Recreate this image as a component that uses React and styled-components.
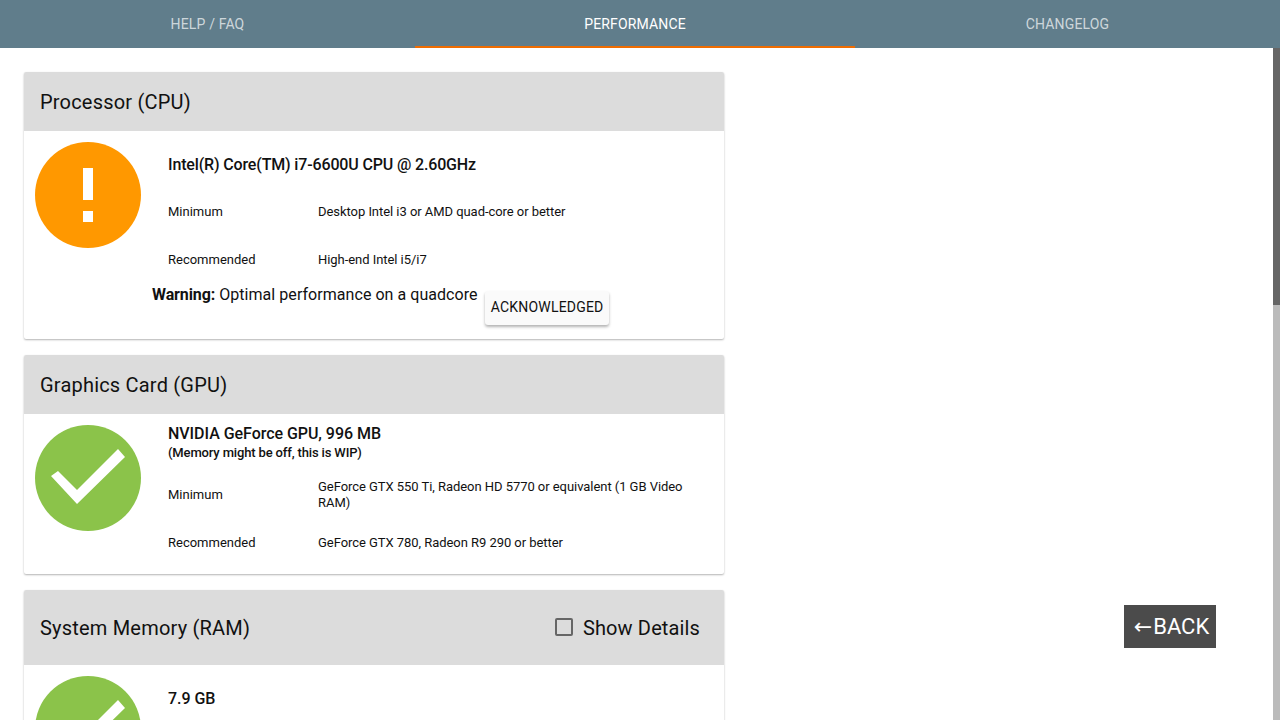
import React from 'react';
import styled, { createGlobalStyle } from 'styled-components';

const GlobalStyle = createGlobalStyle`
  html, body, #root {
    margin: 0;
    height: 100%;
  }
  body {
    overflow: hidden;
    background: #fff;
    font-family: Roboto, "Liberation Sans", sans-serif;
    color: #111;
  }
`;

const Page = styled.div`
  position: relative;
  display: flex;
  flex-direction: column;
  height: 720px;
`;

const Tabs = styled.nav`
  display: grid;
  grid-template-columns: 415px 440px 425px;
  flex: 0 0 48px;
  background: #607d8b;
`;

const Tab = styled.div`
  display: flex;
  align-items: center;
  justify-content: center;
  border-bottom: 2px solid ${(p) => (p.$active ? '#ef6c00' : 'transparent')};
  border-top: 2px solid transparent;
  color: ${(p) => (p.$active ? '#fff' : 'rgba(255, 255, 255, 0.7)')};
  font-size: 14px;
  font-weight: 400;
  letter-spacing: 0.15px;
  text-transform: uppercase;
`;

const Body = styled.div`
  display: flex;
  flex: 1;
  min-height: 0;
`;

const Content = styled.main`
  flex: 1;
  display: flex;
  flex-direction: column;
  gap: 16px;
  padding: 24px;
  overflow: hidden;
`;

const Scrollbar = styled.div`
  flex: 0 0 7px;
  display: flex;
  flex-direction: column;
  background: #bbb;
`;

const ScrollThumb = styled.div`
  height: 257px;
  background: #666;
`;

const Card = styled.section`
  flex: none;
  width: 700px;
  background: #fff;
  border-radius: 2px;
  box-shadow: 0 1px 2px rgba(0, 0, 0, 0.3);
`;

const CardHeader = styled.header`
  display: flex;
  align-items: center;
  justify-content: space-between;
  height: ${(p) => (p.$tall ? '75px' : '59px')};
  padding: 0 24px 0 16px;
  background: #dcdcdc;
  border-radius: 2px 2px 0 0;
`;

const CardTitle = styled.h2`
  margin: 0;
  font-size: 20px;
  font-weight: 400;
  letter-spacing: 0.2px;
`;

const ShowDetails = styled.label`
  display: flex;
  align-items: center;
  gap: 10px;
  font-size: 20px;
  letter-spacing: 0.13px;
`;

const CheckBox = styled.span`
  box-sizing: border-box;
  width: 18px;
  height: 18px;
  margin-bottom: 2px;
  border: 2px solid #666;
  border-radius: 2px;
`;

const CardBody = styled.div`
  display: flex;
  padding: 8px 0;
`;

const IconColumn = styled.div`
  flex: 0 0 144px;
  padding: 3px 0 0 11px;
  box-sizing: border-box;
`;

const Details = styled.div`
  flex: 1;
  display: flex;
  flex-direction: column;
  padding-right: 16px;
`;

const DeviceName = styled.div`
  display: flex;
  flex-direction: column;
  justify-content: center;
  box-sizing: border-box;
  height: 48px;
  padding-top: 2px;
  font-size: 16px;
  font-weight: 500;
  letter-spacing: ${(p) => (p.$tight ? '-0.15px' : '-0.04px')};
`;

const DeviceNote = styled.div`
  margin-bottom: 8px;
  font-size: 13px;
  line-height: 19px;
  letter-spacing: -0.15px;
`;

const Row = styled.div`
  display: flex;
  align-items: center;
  box-sizing: border-box;
  height: 48px;
  padding-top: 2px;
  font-size: 13px;
  line-height: 16px;
`;

const RowLabel = styled.div`
  flex: 0 0 150px;
`;

const RowValue = styled.div`
  flex: 1;
  letter-spacing: -0.05px;
`;

const WarningRow = styled.div`
  display: flex;
  align-items: flex-start;
  gap: 7px;
  height: 48px;
  margin-left: -16px;
  font-size: 16px;
  line-height: 24px;
  letter-spacing: 0.05px;
`;

const WarningLabel = styled.strong`
  letter-spacing: -0.1px;
`;

const Acknowledge = styled.button`
  width: 124px;
  height: 34px;
  margin-top: 8px;
  padding: 0 0 2px 1px;
  border: 0;
  border-radius: 3px;
  background: #fafafa;
  box-shadow: 0 2px 3px rgba(0, 0, 0, 0.3);
  color: #111;
  font-family: inherit;
  font-size: 14px;
  letter-spacing: 0.2px;
  text-transform: uppercase;
`;

const BackButton = styled.button`
  position: absolute;
  left: 1124px;
  top: 605px;
  display: flex;
  align-items: center;
  justify-content: center;
  width: 92px;
  height: 43px;
  padding: 0 0 0 3px;
  border: 0;
  background: #4b4b4b;
  color: #fff;
  font-family: Roboto, "DejaVu Sans", sans-serif;
  font-size: 22px;
`;

const BackArrow = styled.span`
  margin-right: 1px;
`;

const WarningIcon = () => (
  <svg width="106" height="106" viewBox="0 0 106 106">
    <circle cx="53" cy="53" r="53" fill="#ff9800" />
    <path d="M48 26h10v32H48zM48 69h10v11H48z" fill="#fff" />
  </svg>
);

const CheckIcon = () => (
  <svg width="106" height="106" viewBox="0 0 106 106">
    <circle cx="53" cy="53" r="53" fill="#8bc34a" />
    <path d="M16 51l26 28 48-47-7-8-41 41-19-19z" fill="#fff" />
  </svg>
);

const App = () => (
  <Page>
    <GlobalStyle />
    <Tabs>
      <Tab>Help / FAQ</Tab>
      <Tab $active>Performance</Tab>
      <Tab>Changelog</Tab>
    </Tabs>
    <Body>
      <Content>
        <Card>
          <CardHeader>
            <CardTitle>Processor (CPU)</CardTitle>
          </CardHeader>
          <CardBody>
            <IconColumn>
              <WarningIcon />
            </IconColumn>
            <Details>
              <DeviceName $tight>Intel(R) Core(TM) i7-6600U CPU @ 2.60GHz</DeviceName>
              <Row>
                <RowLabel>Minimum</RowLabel>
                <RowValue>Desktop Intel i3 or AMD quad-core or better</RowValue>
              </Row>
              <Row>
                <RowLabel>Recommended</RowLabel>
                <RowValue>High-end Intel i5/i7</RowValue>
              </Row>
              <WarningRow>
                <span>
                  <WarningLabel>Warning:</WarningLabel> Optimal performance on a quadcore
                </span>
                <Acknowledge>Acknowledged</Acknowledge>
              </WarningRow>
            </Details>
          </CardBody>
        </Card>

        <Card>
          <CardHeader>
            <CardTitle>Graphics Card (GPU)</CardTitle>
          </CardHeader>
          <CardBody>
            <IconColumn>
              <CheckIcon />
            </IconColumn>
            <Details>
              <DeviceName>
                NVIDIA GeForce GPU, 996 MB
                <DeviceNote>(Memory might be off, this is WIP)</DeviceNote>
              </DeviceName>
              <Row>
                <RowLabel>Minimum</RowLabel>
                <RowValue>GeForce GTX 550 Ti, Radeon HD 5770 or equivalent (1 GB Video RAM)</RowValue>
              </Row>
              <Row>
                <RowLabel>Recommended</RowLabel>
                <RowValue>GeForce GTX 780, Radeon R9 290 or better</RowValue>
              </Row>
            </Details>
          </CardBody>
        </Card>

        <Card>
          <CardHeader $tall>
            <CardTitle>System Memory (RAM)</CardTitle>
            <ShowDetails>
              <CheckBox />
              Show Details
            </ShowDetails>
          </CardHeader>
          <CardBody>
            <IconColumn>
              <CheckIcon />
            </IconColumn>
            <Details>
              <DeviceName>7.9 GB</DeviceName>
            </Details>
          </CardBody>
        </Card>
      </Content>
      <Scrollbar>
        <ScrollThumb />
      </Scrollbar>
    </Body>
    <BackButton>
      <BackArrow>←</BackArrow>BACK
    </BackButton>
  </Page>
);

export default App;
